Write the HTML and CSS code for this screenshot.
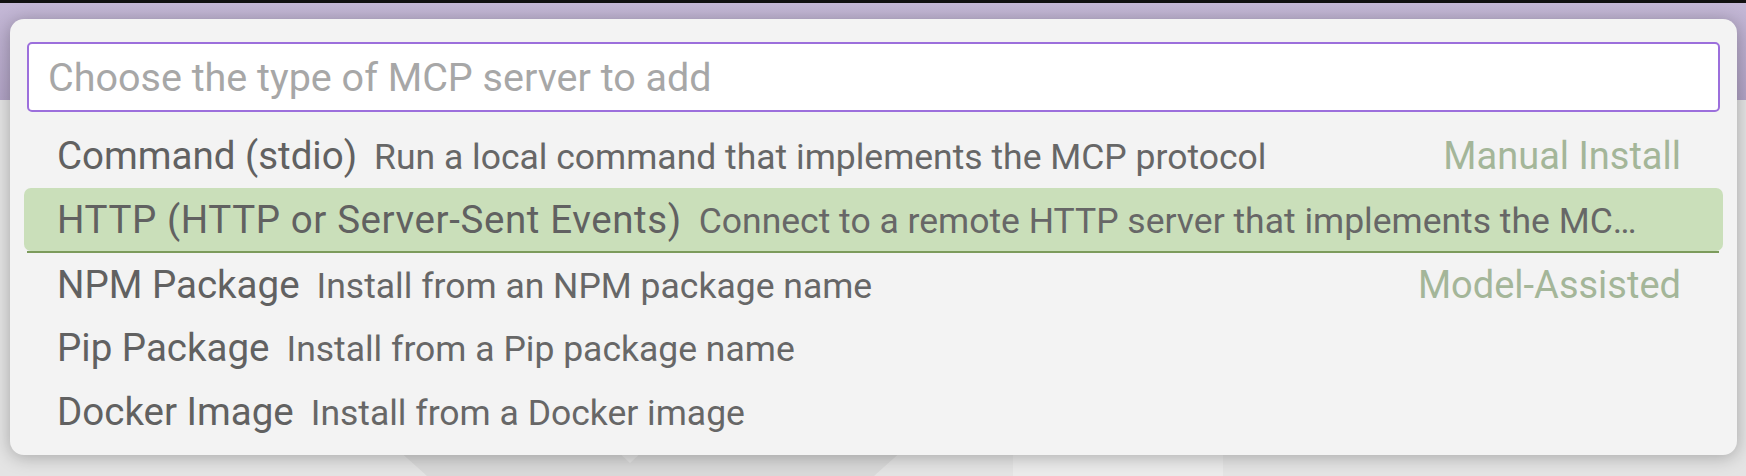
FILE: index.html
```html
<!DOCTYPE html>
<html lang="en">
<head>
  <meta charset="UTF-8">
  <meta name="viewport" content="width=device-width, initial-scale=1.0">
  <title>Add MCP Server</title>
  <link rel="stylesheet" href="styles.css">
</head>
<body>

<!-- Window behind the picker -->
<div class="workbench">
  <div class="titlebar"></div>
  <div class="editor">
    <svg class="watermark" width="1746" height="376" viewBox="0 0 1746 376">
      <polygon points="387,340 605,340 630,363 655,340 914,340 874,376 427,376" fill="#d9d9d9" />
      <rect x="1013" y="340" width="210" height="36" fill="#ebebeb" />
    </svg>
  </div>
</div>

<!-- Quick pick -->
<div class="quick-pick">
  <div class="quick-input">
    <input type="text" placeholder="Choose the type of MCP server to add" />
  </div>
  <ul class="pick-list">
    <li class="pick-row">
      <span class="label">Command (stdio)</span>
      <span class="desc">Run a local command that implements the MCP protocol</span>
      <span class="sep-label">Manual Install</span>
    </li>
    <li class="pick-row focused">
      <span class="label">HTTP (HTTP or Server-Sent Events)</span>
      <span class="desc">Connect to a remote HTTP server that implements the MCP protocol</span>
    </li>
    <li class="pick-row separator">
      <span class="label">NPM Package</span>
      <span class="desc">Install from an NPM package name</span>
      <span class="sep-label">Model-Assisted</span>
    </li>
    <li class="pick-row">
      <span class="label">Pip Package</span>
      <span class="desc">Install from a Pip package name</span>
    </li>
    <li class="pick-row">
      <span class="label">Docker Image</span>
      <span class="desc">Install from a Docker image</span>
    </li>
  </ul>
</div>

</body>
</html>
```

FILE: styles.css
```css
body {
  margin: 0;
  width: 1746px;
  height: 476px;
  overflow: hidden;
  position: relative;
  font-family: Roboto, "Noto Sans", sans-serif;
  background-color: #e6e6e6;
}

.workbench {
  display: flex;
  flex-direction: column;
  height: 476px;
}

.titlebar {
  height: 97px;
  border-top: 3px solid #111;
  background: linear-gradient(#c4b8d6, #b1a3c5);
}

.editor {
  flex: 1;
  display: flex;
  align-items: flex-end;
  background-color: #e4e4e4;
}

.watermark {
  display: block;
}

/* Quick pick overlay */
.quick-pick {
  position: absolute;
  top: 19px;
  left: 10px;
  width: 1727px;
  height: 436px;
  box-sizing: border-box;
  padding: 23px 14px 11px;
  background-color: #f3f3f3;
  border-radius: 14px;
  box-shadow: 0 2px 18px rgba(0, 0, 0, 0.28);
}

.quick-input {
  margin: 0 3px;
}

.quick-input input {
  display: block;
  width: 100%;
  height: 70px;
  box-sizing: border-box;
  border: 2px solid #9c6fdc;
  border-radius: 5px;
  padding: 0 19px;
  background-color: white;
  font-family: inherit;
  font-size: 39.5px;
  color: #333;
}

.quick-input input::placeholder {
  color: #a7a7a7;
}

.quick-input input:focus {
  outline: none;
}

.pick-list {
  list-style: none;
  margin: 12px 0 0;
  padding: 0;
}

.pick-row {
  display: flex;
  align-items: baseline;
  height: 64px;
  box-sizing: border-box;
  padding: 0 42px 0 33px;
  line-height: 64px;
  font-size: 38.5px;
  color: #616161;
  white-space: nowrap;
  border-radius: 7px;
}

.pick-row.focused {
  height: 63px;
  padding-right: 75px;
  background-color: #cadfba;
}

.pick-row.focused .label {
  letter-spacing: 0.6px;
}

.pick-row.separator {
  height: 65px;
  margin: 0 4px 0 3px;
  padding: 0 38px 0 30px;
  border-top: 2px solid #7c9b5c;
  border-radius: 0;
  line-height: 63px;
}

.label {
  flex-shrink: 0;
}

.desc {
  min-width: 0;
  margin-left: 17px;
  font-size: 35.5px;
  color: #676767;
  overflow: hidden;
  text-overflow: ellipsis;
}

.sep-label {
  flex-shrink: 0;
  margin-left: auto;
  padding-left: 20px;
  font-size: 38px;
  color: #a4b699;
}
```
